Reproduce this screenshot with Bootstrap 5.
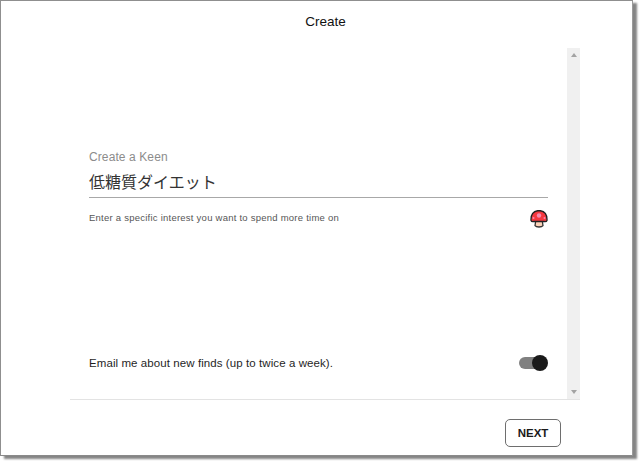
<!DOCTYPE html>
<html lang="en">
<head>
<meta charset="utf-8">
<title>Create a Keen</title>
<link href="https://cdn.jsdelivr.net/npm/bootstrap@5.3.0/dist/css/bootstrap.min.css" rel="stylesheet">
<style>
html,body{height:100%;background:#fff;overflow:hidden}
body{font-family:"Liberation Sans",Arial,sans-serif;color:#1a1a1a}
.dlg-frame{width:633px;height:456px;border:1px solid #8f8f8f;border-right-color:#9a9a9a;border-bottom-color:#8a8a8a;background:#fff;box-shadow:4px 3px 2px #858585;padding-bottom:7px}
.dlg-title{height:47px;padding:13px 0 0 18px;font-size:13.5px;line-height:16px;color:#111}
.dlg-body{margin-left:69px;width:510px;height:352px;border-bottom:1px solid #e3e3e3}
.dlg-scroll-main{padding:102px 19px 0 19px}
.dlg-scrollbar{width:13px;background:#f0f0f0;padding:5px 0}
.arrow-up,.arrow-down{width:0;height:0;border-left:3px solid transparent;border-right:3px solid transparent}
.arrow-up{border-bottom:4px solid #a3a3a3}
.arrow-down{border-top:4px solid #a3a3a3}
.keen-label{font-size:12px;letter-spacing:.1px;line-height:14px;color:#8c8c8c}
.keen-input{font-family:"Noto Sans CJK JP","Liberation Sans",sans-serif;font-size:16px;line-height:24px;color:#333;height:30px;padding-top:1px;border-bottom:1px solid #a8a8a8;margin-top:4px}
.keen-hint{font-size:9.5px;letter-spacing:.24px;line-height:12px;color:#565656;margin-top:14px}
.mush{width:18px;height:18px;margin-top:12px}
.email-row{margin-top:127px;font-size:11.5px;letter-spacing:.08px;line-height:16px;color:#1f1f1f}
.tog{position:relative;width:29px;height:16px}
.tog-track{position:absolute;left:0;top:2px;width:24px;height:12px;border-radius:6px;background:#808080}
.tog-knob{position:absolute;right:0;top:0;width:16px;height:16px;border-radius:50%;background:#1a1a1a}
.dlg-foot{padding:19px 71px 0 0}
.next-btn{width:56px;height:28px;padding:0;font-size:11.5px;font-weight:700;line-height:26px;color:#1a1a1a;background:#fff;border:1px solid #6e6e6e;border-radius:5px}
</style>
</head>
<body>
<div class="dlg-frame d-flex flex-column">
  <div class="dlg-title text-center">Create</div>
  <div class="dlg-body d-flex">
    <div class="dlg-scroll-main flex-grow-1">
      <div class="keen-label">Create a Keen</div>
      <div class="keen-input">低糖質ダイエット</div>
      <div class="d-flex justify-content-between align-items-start">
        <div class="keen-hint">Enter a specific interest you want to spend more time on</div>
        <svg class="mush" viewBox="0 0 18 18" aria-hidden="true">
          <path d="M5.800 10.500h6.400l.8 5.200q-1 1.300-4 1.300t-4-1.300z" fill="#fcd2b8" stroke="#333" stroke-width="1.300"/>
          <path d="M1 10.500q-.5-9.500 8-10 8.500.5 8 10-.5 1.500-3 1h-10q-2.500.5-3-1z" fill="#f5383f" stroke="#222" stroke-width="1.300"/>
          <circle cx="9" cy="5.500" r="2.200" fill="#f58ab0"/>
          <circle cx="3.500" cy="8" r="1" fill="#f58ab0"/>
          <circle cx="14.500" cy="8" r="1" fill="#f58ab0"/>
        </svg>
      </div>
      <div class="email-row d-flex justify-content-between align-items-center">
        <span>Email me about new finds (up to twice a week).</span>
        <span class="tog"><span class="tog-track"></span><span class="tog-knob"></span></span>
      </div>
    </div>
    <div class="dlg-scrollbar d-flex flex-column justify-content-between align-items-center">
      <span class="arrow-up"></span>
      <span class="arrow-down"></span>
    </div>
  </div>
  <div class="dlg-foot d-flex justify-content-end">
    <button type="button" class="next-btn">NEXT</button>
  </div>
</div>
<script src="https://cdn.jsdelivr.net/npm/bootstrap@5.3.0/dist/js/bootstrap.bundle.min.js"></script>
</body>
</html>
